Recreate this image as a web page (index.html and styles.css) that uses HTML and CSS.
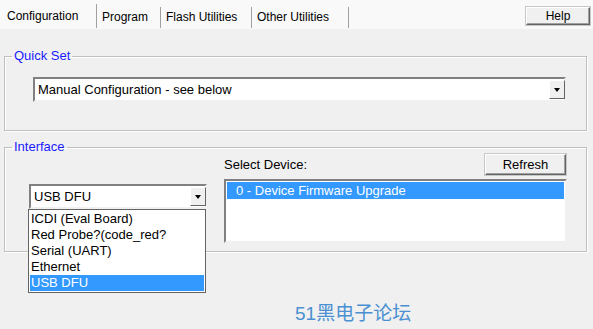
FILE: index.html
```html
<!DOCTYPE html>
<html lang="en">
<head>
  <meta charset="UTF-8" />
  <title>LM Flash Programmer</title>
  <link rel="stylesheet" href="styles.css">
</head>
<body>
  <div class="window">
    <div class="tabbar">
      <div class="tab active">Configuration</div>
      <div class="tab">Program</div>
      <div class="tab">Flash Utilities</div>
      <div class="tab">Other Utilities</div>
      <button class="btn help">Help</button>
    </div>

    <fieldset class="group quickset">
      <legend>Quick Set</legend>
      <div class="quickset-body">
        <div class="combo wide">
          <span class="combo-text">Manual Configuration - see below</span>
          <span class="combo-arrow"></span>
        </div>
      </div>
    </fieldset>

    <fieldset class="group interface">
      <legend>Interface</legend>
      <div class="iface-left">
        <div class="combo small">
          <span class="combo-text">USB DFU</span>
          <span class="combo-arrow"></span>
        </div>
        <ul class="droplist">
          <li>ICDI (Eval Board)</li>
          <li>Red Probe?(code_red?</li>
          <li>Serial (UART)</li>
          <li>Ethernet</li>
          <li class="sel">USB DFU</li>
        </ul>
      </div>
      <div class="iface-right">
        <div class="device-head">
          <span>Select Device:</span>
          <button class="btn refresh">Refresh</button>
        </div>
        <ul class="listbox">
          <li class="sel">0 - Device Firmware Upgrade</li>
        </ul>
      </div>
    </fieldset>

    <div class="watermark">51黑电子论坛</div>
  </div>
</body>
</html>
```

FILE: styles.css
```css
body {
  margin: 0;
  background: #f0f0f0;
  font-family: "Liberation Sans", Arial, sans-serif;
  font-size: 12px;
  color: #000;
}

.window {
  width: 593px;
  height: 329px;
  overflow: hidden;
}

.tabbar {
  display: flex;
  align-items: flex-end;
  height: 29px;
  padding-left: 2px;
  background: #f9f9f9;
  position: relative;
}

.tab {
  height: 21px;
  line-height: 21px;
  padding: 0 5px;
  border-right: 1px solid #a0a0a0;
  font-size: 12px;
  color: #000;
  margin-bottom: 1px;
}

.tab.active {
  height: 24px;
  line-height: 24px;
  width: 84px;
  padding: 0 5px;
}

.tab:nth-child(2) { width: 53px; }
.tab:nth-child(3) { width: 80px; }
.tab:nth-child(4) { width: 86px; }

.btn {
  font-family: inherit;
  font-size: 12px;
  background: #f0f0f0;
  border: 1px solid;
  border-color: #ffffff #646464 #646464 #ffffff;
  box-shadow: -1px -1px 0 #a0a0a0 inset;
  outline: 1px solid #c8c8c8;
  padding: 0;
  color: #000;
}

.help {
  position: absolute;
  left: 526px;
  top: 7px;
  width: 64px;
  height: 18px;
}

.group {
  margin: 0 0 0 4px;
  width: 583px;
  box-sizing: border-box;
  border: 1px solid #bfbfbf;
  border-radius: 0;
  box-shadow: 1px 1px 0 #ffffff inset, 1px 1px 0 #ffffff;
  padding: 0;
}

.group legend {
  color: #1a1aff;
  padding: 0 2px;
  margin-left: 7px;
  font-size: 13px;
  line-height: 14px;
}

.quickset {
  margin-top: 20px;
  height: 82px;
}

.quickset-body {
  padding: 14px 20px 0 28px;
}

.combo {
  display: flex;
  align-items: center;
  background: #fff;
  border: 2px solid;
  border-color: #808080 #f0f0f0 #f0f0f0 #808080;
  box-sizing: border-box;
  position: relative;
}

.combo-text {
  flex: 1;
  padding-left: 3px;
  font-size: 13px;
  white-space: nowrap;
}

.combo-arrow {
  width: 16px;
  height: 19px;
  background: #f0f0f0;
  border-left: 1px solid #fff;
  border-top: 1px solid #fff;
  border-right: 1px solid #646464;
  border-bottom: 1px solid #646464;
  box-sizing: border-box;
  position: relative;
  margin-right: -1px;
}

.combo-arrow::after {
  content: "";
  position: absolute;
  left: 4px;
  top: 7px;
  border-left: 3.5px solid transparent;
  border-right: 3.5px solid transparent;
  border-top: 4px solid #000;
}

.wide {
  width: 533px;
  height: 25px;
}

.interface {
  margin-top: 9px;
  height: 112px;
  display: flex;
  padding: 0;
  position: relative;
}

.iface-left {
  width: 178px;
  padding: 30px 0 0 24px;
  position: relative;
}

.small {
  width: 178px;
  height: 25px;
}

.droplist {
  position: absolute;
  left: 23px;
  top: 55px;
  width: 178px;
  margin: 0;
  padding: 1px;
  list-style: none;
  background: #fff;
  border: 1px solid #646464;
  box-sizing: border-box;
  z-index: 2;
}

.droplist li {
  height: 16px;
  line-height: 16px;
  padding-left: 1px;
  font-size: 13px;
}

.droplist li.sel,
.listbox li.sel {
  background: #3399ff;
  color: #fff;
}

.iface-right {
  margin-left: 17px;
  width: 343px;
}

.device-head {
  display: flex;
  justify-content: space-between;
  align-items: flex-start;
  height: 25px;
  font-size: 13px;
}

.device-head span {
  padding-top: 3px;
}

.refresh {
  width: 81px;
  height: 21px;
  font-size: 13px;
  margin-right: 1px;
  margin-top: 0;
}

.listbox {
  margin: 0;
  padding: 1px;
  list-style: none;
  width: 343px;
  height: 64px;
  box-sizing: border-box;
  background: #fff;
  border: 2px solid;
  border-color: #808080 #f0f0f0 #f0f0f0 #808080;
}

.listbox li {
  height: 17px;
  line-height: 17px;
  padding-left: 9px;
  font-size: 13px;
}

.watermark {
  margin: 51px 0 0 295px;
  font-family: "Liberation Sans", "Noto Sans CJK SC", sans-serif;
  font-size: 19px;
  color: #4a90d2;
  line-height: 22px;
}
```
